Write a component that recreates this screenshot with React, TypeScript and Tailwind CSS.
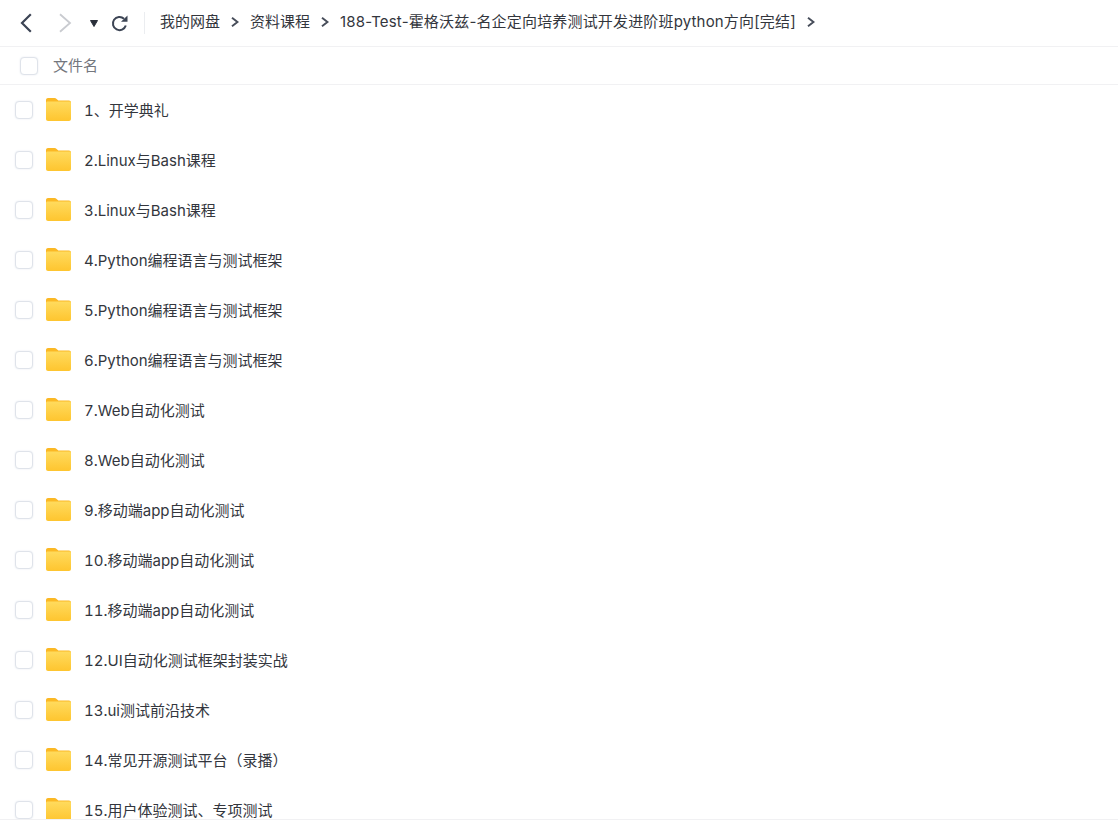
const folders = [
  '1、开学典礼',
  '2.Linux与Bash课程',
  '3.Linux与Bash课程',
  '4.Python编程语言与测试框架',
  '5.Python编程语言与测试框架',
  '6.Python编程语言与测试框架',
  '7.Web自动化测试',
  '8.Web自动化测试',
  '9.移动端app自动化测试',
  '10.移动端app自动化测试',
  '11.移动端app自动化测试',
  '12.UI自动化测试框架封装实战',
  '13.ui测试前沿技术',
  '14.常见开源测试平台（录播）',
  '15.用户体验测试、专项测试',
];

const crumbs = ['我的网盘', '资料课程', '188-Test-霍格沃兹-名企定向培养测试开发进阶班python方向[完结]'];

function FolderIcon() {
  return (
    <svg width="25" height="23" viewBox="0 0 25 23" className="shrink-0">
      <defs>
        <linearGradient id="folderBody" x1="0" y1="0" x2="0" y2="1">
          <stop offset="0" stopColor="#ffdb5e" />
          <stop offset="1" stopColor="#fec52f" />
        </linearGradient>
      </defs>
      <path d="M0 2C0 .9.900 0 2 0h6.500c.9 0 1.500.4 2.100 1L12.300 2.500H23c1.100 0 2 .9 2 2V6H0z" fill="#fbb824" />
      <path d="M0 5c0-.8.700-1.500 1.500-1.500h22c.8 0 1.500.7 1.500 1.500v16c0 1.100-.9 2-2 2H2c-1.100 0-2-.9-2-2z" fill="url(#folderBody)" />
    </svg>
  );
}

function Checkbox() {
  return <div className="w-[18px] h-[18px] shrink-0 rounded-[4px] border border-[#dfe3ea] bg-white shadow-[0_0_2px_#e6e9ef]" />;
}

function CrumbArrow() {
  return (
    <svg width="8" height="10" viewBox="0 0 8 10" fill="none" className="mx-[11px]">
      <path d="M1 .8 6.500 5 1 9.200" stroke="#474d5a" strokeWidth="2" />
    </svg>
  );
}

export default function App() {
  return (
    <div className="w-[1118px] h-[835px] overflow-hidden bg-white text-[15px] text-[#33363d] font-['Inter','Noto_Sans_CJK_SC',sans-serif]">
      <div className="h-[47px] flex items-center border-b border-[#f1f1f3]">
        <svg width="12" height="20" viewBox="0 0 12 20" fill="none" className="ml-[20px] -mt-[1px]">
          <path d="M10.800 1.200 2 10l8.800 8.800" stroke="#3c4454" strokeWidth="2.200" />
        </svg>
        <svg width="14" height="20" viewBox="0 0 14 20" fill="none" className="ml-[26px] -mt-[1px]">
          <path d="M2 1.200 12 10 2 18.800" stroke="#c9cbd0" strokeWidth="1.800" />
        </svg>
        <svg width="8" height="7" viewBox="0 0 8 7" className="ml-[18px]">
          <path d="M.5.500h7L4 6.500z" fill="#2a2f3a" stroke="#2a2f3a" strokeLinejoin="round" />
        </svg>
        <svg width="17" height="17" viewBox="0 0 17 17" fill="none" className="ml-[13px]">
          <path d="M14.800 10.500A6.600 6.600 0 1 1 13 3.700" stroke="#3c4454" strokeWidth="2" />
          <path d="M10 6.800h6.500V.5z" fill="#3c4454" />
        </svg>
        <div className="ml-[16px] w-px h-[22px] bg-[#ebedf0]" />
        <div className="ml-[15px] flex items-center -mt-[2px]">
          {crumbs.map((c) => (
            <div key={c} className="flex items-center last:tracking-[0.17px]">
              <span className="whitespace-nowrap">{c}</span>
              <CrumbArrow />
            </div>
          ))}
        </div>
      </div>
      <div className="h-[38px] flex items-center border-b border-[#f1f1f3] pl-[20px]">
        <Checkbox />
        <span className="ml-[15px] mt-[2px] text-[#73767d]">文件名</span>
      </div>
      <div className="h-[735px] overflow-hidden border-b border-[#f1f1f3]">
        {folders.map((name) => (
          <div key={name} className="h-[50px] flex items-center pl-[15px]">
            <Checkbox />
            <div className="ml-[13px] -mt-[1px] flex">
              <FolderIcon />
            </div>
            <span className="ml-[13px] mt-[2px] whitespace-nowrap tabular-nums">{name}</span>
          </div>
        ))}
      </div>
    </div>
  );
}
